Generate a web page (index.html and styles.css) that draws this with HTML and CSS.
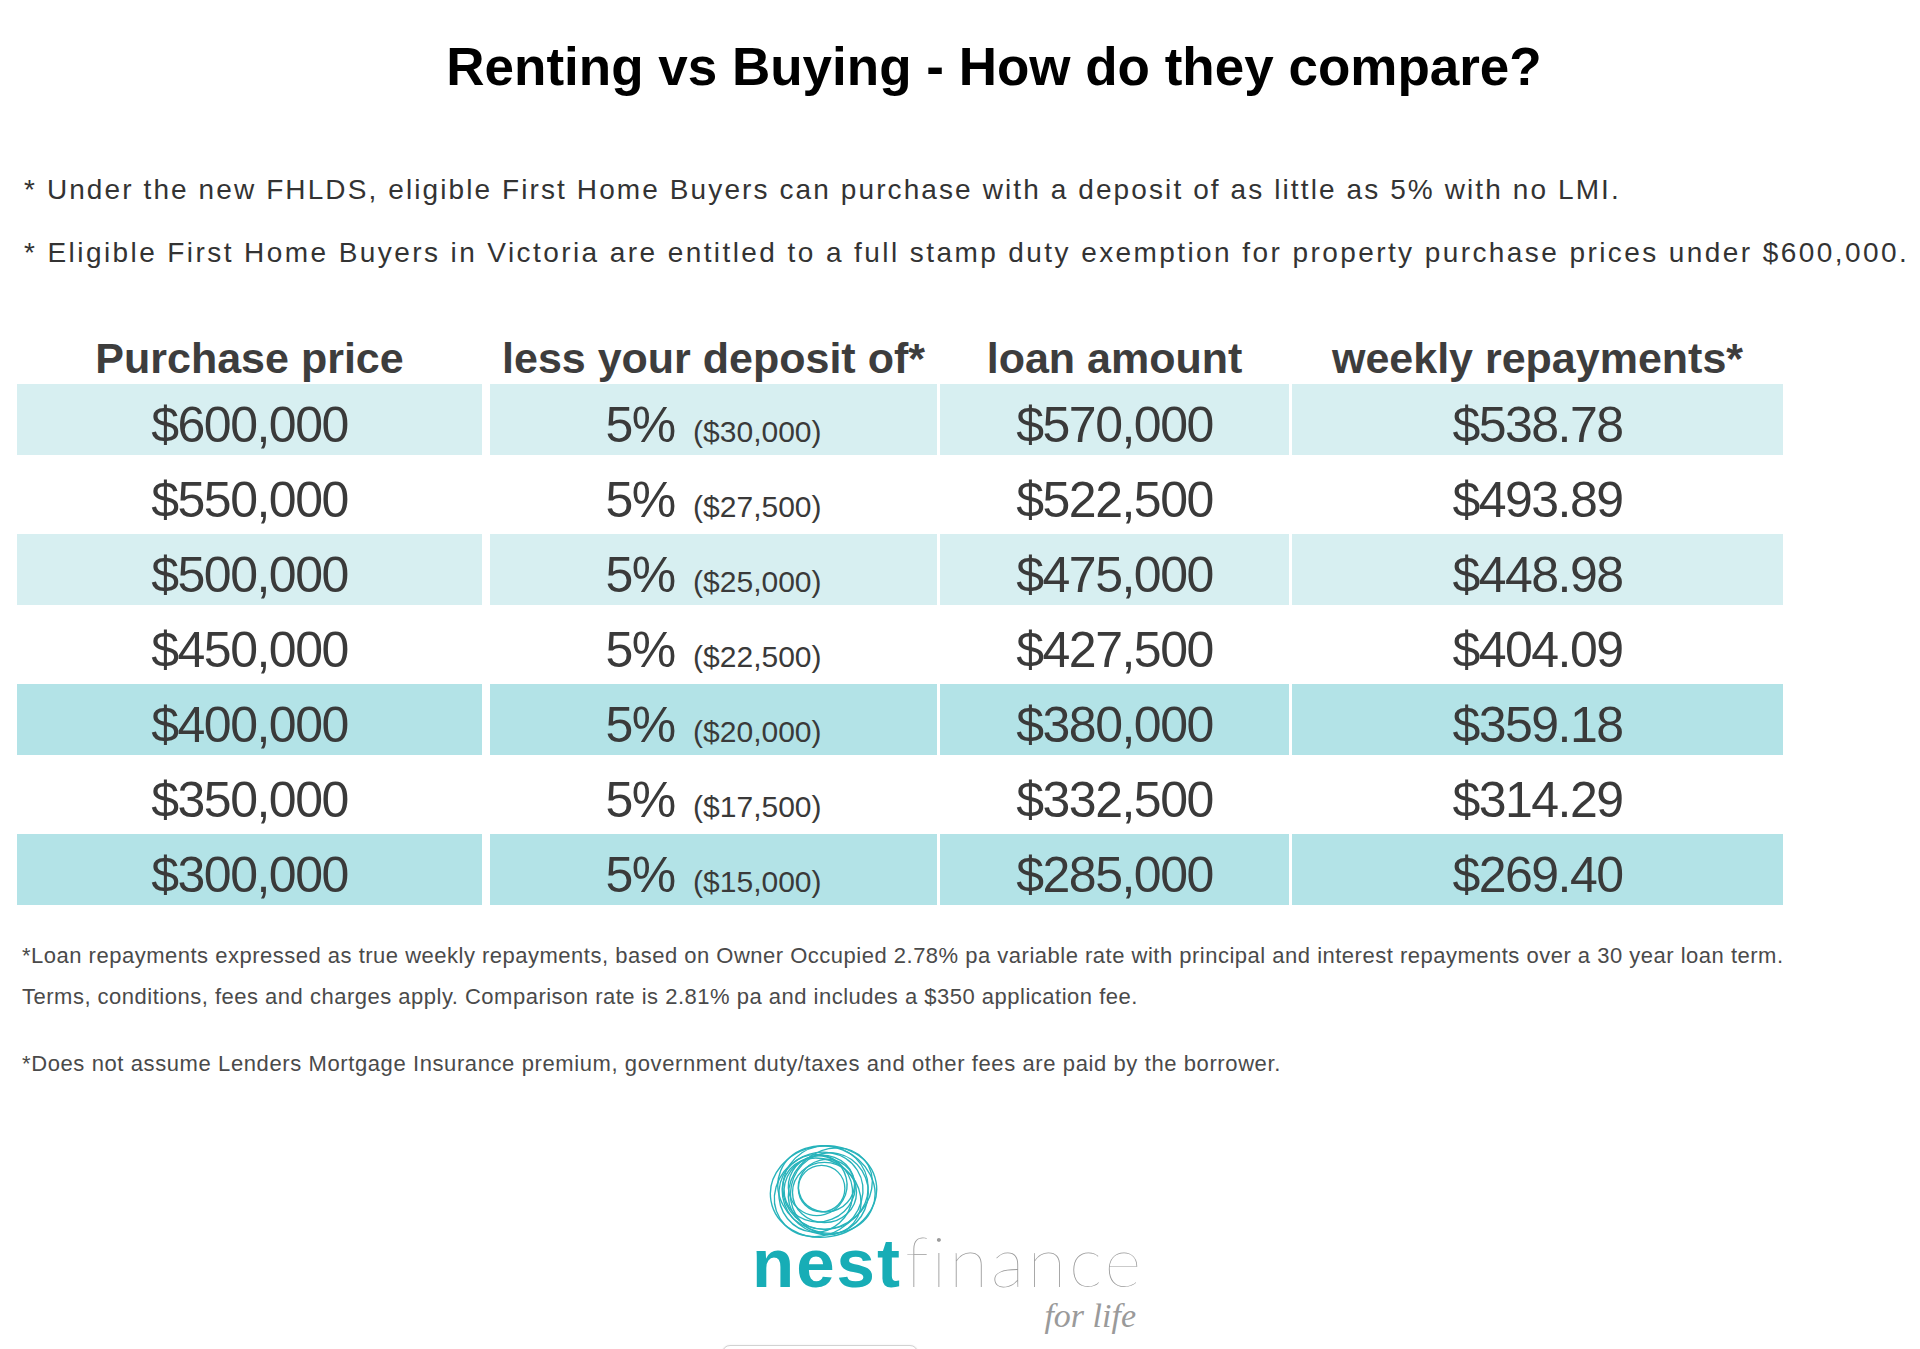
FILE: index.html
```html
<!DOCTYPE html>
<html lang="en">
<head>
<meta charset="utf-8">
<title>Renting vs Buying - How do they compare?</title>
<link rel="stylesheet" href="styles.css">
</head>
<body>
<main class="page">
  <h1 class="title">Renting vs Buying - How do they compare?</h1>

  <div class="notes">
    <p class="note-one">* Under the new FHLDS, eligible First Home Buyers can purchase with a deposit of as little as 5% with no LMI.</p>
    <p class="note-two">* Eligible First Home Buyers in Victoria are entitled to a full stamp duty exemption for property purchase prices under $600,000.</p>
  </div>

  <div class="table">
    <div class="row head">
      <div class="cell">Purchase price</div>
      <div class="cell">less your deposit of*</div>
      <div class="cell">loan amount</div>
      <div class="cell">weekly repayments*</div>
    </div>
    <div class="row light">
      <div class="cell">$600,000</div>
      <div class="cell dep"><span class="pct">5%</span> <span class="amt">($30,000)</span></div>
      <div class="cell">$570,000</div>
      <div class="cell">$538.78</div>
    </div>
    <div class="row">
      <div class="cell">$550,000</div>
      <div class="cell dep"><span class="pct">5%</span> <span class="amt">($27,500)</span></div>
      <div class="cell">$522,500</div>
      <div class="cell">$493.89</div>
    </div>
    <div class="row light">
      <div class="cell">$500,000</div>
      <div class="cell dep"><span class="pct">5%</span> <span class="amt">($25,000)</span></div>
      <div class="cell">$475,000</div>
      <div class="cell">$448.98</div>
    </div>
    <div class="row">
      <div class="cell">$450,000</div>
      <div class="cell dep"><span class="pct">5%</span> <span class="amt">($22,500)</span></div>
      <div class="cell">$427,500</div>
      <div class="cell">$404.09</div>
    </div>
    <div class="row dark">
      <div class="cell">$400,000</div>
      <div class="cell dep"><span class="pct">5%</span> <span class="amt">($20,000)</span></div>
      <div class="cell">$380,000</div>
      <div class="cell">$359.18</div>
    </div>
    <div class="row">
      <div class="cell">$350,000</div>
      <div class="cell dep"><span class="pct">5%</span> <span class="amt">($17,500)</span></div>
      <div class="cell">$332,500</div>
      <div class="cell">$314.29</div>
    </div>
    <div class="row dark">
      <div class="cell">$300,000</div>
      <div class="cell dep"><span class="pct">5%</span> <span class="amt">($15,000)</span></div>
      <div class="cell">$285,000</div>
      <div class="cell">$269.40</div>
    </div>
  </div>

  <div class="footnotes">
    <p>*Loan repayments expressed as true weekly repayments, based on Owner Occupied 2.78% pa variable rate with principal and interest repayments over a 30 year loan term.<br>Terms, conditions, fees and charges apply. Comparison rate is 2.81% pa and includes a $350 application fee.</p>
    <p class="fn-second">*Does not assume Lenders Mortgage Insurance premium, government duty/taxes and other fees are paid by the borrower.</p>
  </div>

  <div class="logo">
    <svg class="nest-mark" viewBox="0 0 116 100" width="113" height="97" aria-hidden="true">
      <g fill="none" stroke="#27b3bb" stroke-width="1.4">
        <ellipse cx="57" cy="50" rx="55" ry="47" transform="rotate(-10 57 50)"/>
        <ellipse cx="60" cy="48" rx="51" ry="44" transform="rotate(22 60 48)"/>
        <ellipse cx="52" cy="53" rx="47" ry="42" transform="rotate(-32 52 53)"/>
        <ellipse cx="59" cy="46" rx="44" ry="43"/>
        <ellipse cx="55" cy="55" rx="43" ry="37" transform="rotate(40 55 55)"/>
        <ellipse cx="63" cy="52" rx="40" ry="42" transform="rotate(12 63 52)"/>
        <ellipse cx="53" cy="47" rx="37" ry="34" transform="rotate(-22 53 47)"/>
        <ellipse cx="58" cy="51" rx="33" ry="31"/>
        <ellipse cx="51" cy="44" rx="30" ry="31" transform="rotate(30 51 44)"/>
        <ellipse cx="60" cy="44" rx="29" ry="27" transform="rotate(-15 60 44)"/>
        <ellipse cx="55" cy="47" rx="24" ry="24"/>
        <ellipse cx="49" cy="52" rx="38" ry="40" transform="rotate(5 49 52)"/>
        <ellipse cx="64" cy="47" rx="46" ry="39" transform="rotate(-40 64 47)"/>
      </g>
    </svg>
    <div class="wordmark"><span class="nest">nest</span><span class="finance">finance</span></div>
    <div class="tagline">for life</div>
  </div>

  <div class="btn"></div>
</main>
</body>
</html>
```

FILE: styles.css
```css
html, body {
  margin: 0;
  padding: 0;
  background: #ffffff;
}

body {
  font-family: "Liberation Sans", Arial, sans-serif;
  color: #333333;
}

.page {
  width: 1920px;
}

.title {
  margin: 35px 0 0;
  padding-left: 68px;
  text-align: center;
  font-size: 53px;
  line-height: 64px;
  font-weight: 700;
  color: #000000;
}

.notes {
  margin-top: 59px;
  padding-left: 24px;
}

.notes p {
  margin: 0;
  font-size: 28px;
  line-height: 63px;
  letter-spacing: 2.2px;
  color: #333333;
  white-space: nowrap;
}

.notes .note-one {
  letter-spacing: 2.1px;
}

.notes .note-two {
  letter-spacing: 2.42px;
}

.table {
  margin-top: 47px;
  margin-left: 17px;
  display: flex;
  flex-direction: column;
  gap: 4px;
}

.row {
  display: grid;
  grid-template-columns: 465px 452px 349px 491px;
  column-gap: 3px;
}

.row .cell:nth-child(2) {
  margin-left: 5px;
}

.cell {
  box-sizing: border-box;
  height: 71px;
  padding-top: 12px;
  line-height: 59px;
  font-size: 50px;
  letter-spacing: -1.5px;
  text-align: center;
  color: #3a3a3a;
  white-space: nowrap;
}

.head .cell {
  height: 49px;
  padding-top: 6px;
  line-height: 43px;
  font-size: 43px;
  font-weight: 700;
  letter-spacing: 0;
  color: #3d3d3d;
}

.light .cell {
  background: #d7eff1;
}

.dark .cell {
  background: #b3e3e7;
}

.dep .amt {
  font-size: 30px;
  letter-spacing: 0;
  margin-left: 6px;
}

.footnotes {
  margin-top: 30px;
  padding-left: 22px;
}

.footnotes p {
  margin: 0;
  font-size: 22px;
  line-height: 41px;
  letter-spacing: 0.5px;
  color: #4a4a4a;
  white-space: nowrap;
}

.footnotes .fn-second {
  margin-top: 26px;
  letter-spacing: 0.6px;
}

.logo {
  margin-top: 59px;
  margin-left: 752px;
  width: 390px;
}

.nest-mark {
  display: block;
  margin-left: 16px;
}

.wordmark {
  font-family: "Liberation Sans", Arial, sans-serif;
  font-weight: 700;
  font-size: 69px;
  line-height: 40px;
  white-space: nowrap;
}

.nest {
  color: #17adb6;
  letter-spacing: 2px;
}

.finance {
  font-family: Lato, "Liberation Sans", sans-serif;
  font-weight: 200;
  font-size: 71px;
  letter-spacing: 3px;
  color: #9c9c9c;
  margin-left: 3px;
}

.tagline {
  margin-top: 17px;
  padding-right: 6px;
  text-align: right;
  font-family: "Liberation Serif", "Times New Roman", serif;
  font-style: italic;
  font-size: 34px;
  line-height: 30px;
  color: #9a9a9a;
}

.btn {
  margin-top: 14px;
  margin-left: 722px;
  width: 196px;
  height: 40px;
  box-sizing: border-box;
  border: 1px solid #d2d2d2;
  border-radius: 8px;
  background: #ffffff;
  box-shadow: 0 0 2px rgba(0, 0, 0, 0.08);
}
```
